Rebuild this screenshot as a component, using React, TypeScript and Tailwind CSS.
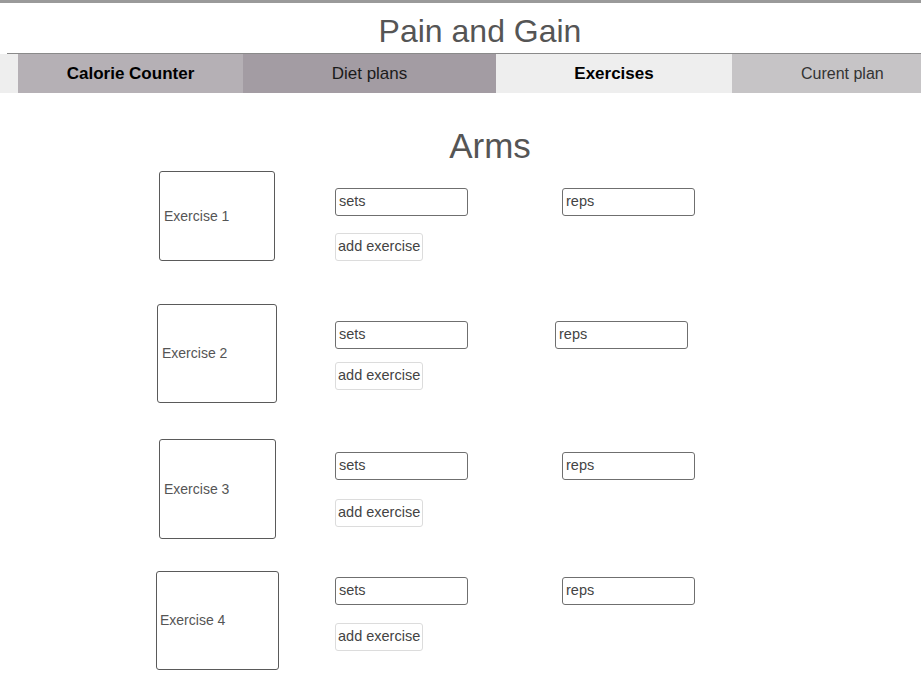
const font = { fontFamily: '"Liberation Sans", Arial, sans-serif' }

type Row = {
  label: string
  wrap: string
  box: string
  col: string
  add: string
  reps: string
}

const rows: Row[] = [
  {
    label: 'Exercise 1',
    wrap: 'mt-[8px]',
    box: 'ml-[159px] w-[116px] h-[90px] pl-[4px]',
    col: 'ml-[60px] pt-[17px]',
    add: 'mt-[17px]',
    reps: 'ml-[94px] mt-[17px]',
  },
  {
    label: 'Exercise 2',
    wrap: 'mt-[43px]',
    box: 'ml-[157px] w-[120px] h-[99px] pl-[4px]',
    col: 'ml-[58px] pt-[17px]',
    add: 'mt-[13px]',
    reps: 'ml-[87px] mt-[17px]',
  },
  {
    label: 'Exercise 3',
    wrap: 'mt-[36px]',
    box: 'ml-[159px] w-[117px] h-[100px] pl-[4px]',
    col: 'ml-[59px] pt-[13px]',
    add: 'mt-[19px]',
    reps: 'ml-[94px] mt-[13px]',
  },
  {
    label: 'Exercise 4',
    wrap: 'mt-[32px]',
    box: 'ml-[156px] w-[123px] h-[99px] pl-[3px]',
    col: 'ml-[56px] pt-[6px]',
    add: 'mt-[18px]',
    reps: 'ml-[94px] mt-[6px]',
  },
]

function Field({ text, className = '' }: { text: string; className?: string }) {
  return (
    <div
      className={`w-[133px] h-[28px] border border-[#6f6f6f] rounded-[3px] flex items-center pl-[3px] text-[14.5px] text-[#444] bg-white ${className}`}
    >
      {text}
    </div>
  )
}

function ExerciseRow({ row }: { row: Row }) {
  return (
    <div className={`flex items-start ${row.wrap}`}>
      <div
        className={`shrink-0 border border-[#5a5a5a] rounded-[3px] flex items-center text-[14px] text-[#555] ${row.box}`}
      >
        {row.label}
      </div>
      <div className={`flex flex-col items-start ${row.col}`}>
        <Field text="sets" />
        <button
          className={`h-[28px] px-[2px] border border-[#dcdcdc] rounded-[3px] text-[14.5px] text-[#444] bg-white ${row.add}`}
        >
          add exercise
        </button>
      </div>
      <Field text="reps" className={row.reps} />
    </div>
  )
}

export default function App() {
  return (
    <div className="w-[921px] h-[689px] bg-white overflow-hidden" style={font}>
      <div className="h-[3px] bg-[#9a9a9a]" />
      <div className="h-[50px] flex items-center justify-center">
        <h1 className="text-[32px] text-[#555] leading-none ml-[39px] mt-[5px]">Pain and Gain</h1>
      </div>
      <div className="h-px bg-[#8a8a8a] ml-[7px]" />
      <nav className="h-[39px] flex bg-[#eeeeee]">
        <div className="w-[18px]" />
        <div className="w-[225px] bg-[#b5b0b5] flex items-center justify-center font-bold text-[17px] text-black">
          Calorie Counter
        </div>
        <div className="w-[253px] bg-[#a39ca3] flex items-center justify-center text-[17px] text-[#1a1a1a]">
          Diet plans
        </div>
        <div className="w-[236px] bg-[#eeeeee] flex items-center justify-center font-bold text-[17px] text-black">
          Exercises
        </div>
        <div className="flex-1 bg-[#c6c4c6] flex items-center pl-[69px] text-[16px] text-[#333]">
          Curent plan
        </div>
      </nav>
      <h2 className="text-[35px] text-[#555] leading-none text-center mt-[35px] ml-[59px]">Arms</h2>
      {rows.map((row) => (
        <ExerciseRow key={row.label} row={row} />
      ))}
    </div>
  )
}
